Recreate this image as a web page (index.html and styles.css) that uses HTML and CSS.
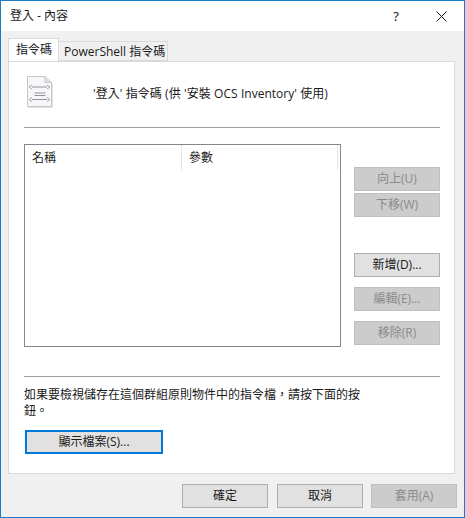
FILE: index.html
```html
<!DOCTYPE html>
<html lang="zh-Hant">
<head>
<meta charset="utf-8">
<title>登入 - 內容</title>
<link rel="stylesheet" href="styles.css">
</head>
<body>
<div class="window">
  <header class="titlebar">
    <span class="title">登入 - 內容</span>
    <span class="help">?</span>
    <svg class="close" width="11" height="11" viewBox="0 0 11 11"><path d="M0.5 0.5L10.5 10.500M10.5 0.5L0.5 10.500" stroke="#1a1a1a" stroke-width="1" fill="none"/></svg>
  </header>
  <div class="body">
    <div class="tabs">
      <div class="tab active">指令碼</div>
      <div class="tab">PowerShell 指令碼</div>
    </div>
    <main class="panel">
      <div class="heading">
        <svg class="doc" width="26" height="33" viewBox="0 0 26 33">
          <path d="M0.5 0.5H18L24.500 6.500V30.500H0.500Z" fill="#f7f7f9" stroke="#c6c6cc"/>
          <path d="M18 0.5V6.500H24.500" fill="#dfdfe4" stroke="#c6c6cc"/>
          <path d="M25.500 7.500V31.500H1.500" fill="none" stroke="#e2e2e6"/>
          <path d="M5 11H20M7.500 17H18.500M7.500 19.500H18.500M5 23.500H20" stroke="#92939b" fill="none"/>
          <path d="M5 9L2 11L5 13M20 9L23 11L20 13M5 21.500L2 23.500L5 25.500M20 21.500L23 23.500L20 25.500" stroke="#a5a6ae" fill="none"/>
        </svg>
        <p class="heading-text">'登入' 指令碼 (供 '安裝 OCS Inventory' 使用)</p>
      </div>
      <hr class="rule">
      <div class="content">
        <div class="list">
          <div class="list-head">
            <div class="col col-name">名稱</div>
            <div class="col col-param">參數</div>
            <div class="col col-end"></div>
          </div>
        </div>
        <div class="side">
          <div class="btn-group">
            <button class="btn" disabled>向上(U)</button>
            <button class="btn" disabled>下移(W)</button>
          </div>
          <div class="btn-group spaced">
            <button class="btn">新增(D)...</button>
            <button class="btn" disabled>編輯(E)...</button>
            <button class="btn" disabled>移除(R)</button>
          </div>
        </div>
      </div>
      <hr class="rule lower">
      <p class="hint">如果要檢視儲存在這個群組原則物件中的指令檔，請按下面的按鈕。</p>
      <button class="btn show">顯示檔案(S)...</button>
    </main>
    <footer class="footer">
      <button class="btn">確定</button>
      <button class="btn">取消</button>
      <button class="btn" disabled>套用(A)</button>
    </footer>
  </div>
</div>
</body>
</html>
```

FILE: styles.css
```css
* { box-sizing: border-box; }
html, body { margin: 0; padding: 0; }
body {
  width: 465px;
  height: 518px;
  overflow: hidden;
  font-family: "Open Sans", "Noto Sans CJK TC", sans-serif;
  font-size: 12px;
  color: #1a1a1a;
}
.window {
  width: 465px;
  height: 518px;
  border: 1px solid #1a7cc4;
  display: flex;
  flex-direction: column;
  background: #f0f0f0;
}
.titlebar {
  height: 30px;
  flex: none;
  background: #fff;
  display: flex;
  align-items: center;
  padding-left: 9px;
}
.title { flex: 1; line-height: 30px; }
.help { width: 12px; text-align: center; font-size: 13px; font-family: "Noto Sans", sans-serif; margin-right: 34px; }
.close { margin-right: 17px; }
.body { flex: 1; display: flex; flex-direction: column; padding: 8px 7px 0; }
.tabs { display: flex; align-items: flex-end; height: 22px; position: relative; z-index: 1; flex: none; }
.tab {
  height: 20px;
  width: 109px;
  padding: 0 0 0 5px;
  line-height: 19px;
  background: #f0f0f0;
  border: 1px solid #d9d9d9;
  border-left: 0;
  white-space: nowrap;
}
.tab.active {
  height: 23px;
  width: 51px;
  padding: 0 0 0 7px;
  line-height: 21px;
  background: #fff;
  border-left: 1px solid #d9d9d9;
  border-bottom: 0;
}
.panel {
  width: 447px;
  height: 413px;
  flex: none;
  background: #fff;
  border: 1px solid #d9d9d9;
  padding: 14px 14px 0 15px;
}
.heading { display: flex; align-items: flex-start; height: 33px; }
.doc { flex: none; margin: 0 0 0 3px; }
.heading-text { margin: 10px 0 0 40px; line-height: 16px; white-space: nowrap; word-spacing: 0.3px; }
.rule { margin: 18px 0 0; border: 0; height: 1px; background: #a0a0a0; width: 416px; }
.rule.lower { margin-top: 29px; }
.content { display: flex; margin-top: 16px; width: 416px; justify-content: space-between; }
.list { width: 317px; height: 203px; border: 1px solid #828790; }
.list-head { display: flex; height: 25px; }
.col { padding: 4px 0 0 7px; line-height: 17px; border-right: 1px solid #e5e5e5; }
.col-name { width: 157px; }
.col-param { flex: 1; }
.col-end { width: 2px; padding: 0; border-right: 0; }
.side { width: 86px; padding-top: 23px; }
.btn-group { display: flex; flex-direction: column; gap: 2px; }
.btn-group.spaced { gap: 10px; margin-top: 36px; }
.btn {
  width: 86px;
  height: 24px;
  padding: 0;
  font: inherit;
  line-height: 20px;
  color: #1a1a1a;
  background: #e1e1e1;
  border: 1px solid #adadad;
}
.btn:disabled { color: #8a8a8a; background: #cccccc; border-color: #bfbfbf; }
.hint { margin: 10px 0 0; width: 340px; line-height: 16px; }
.btn.show { display: block; width: 138px; margin: 11px 0 0 1px; border: 2px solid #0078d7; }
.footer { display: flex; justify-content: flex-end; gap: 9px; padding: 10px 0 0; width: 449px; }
.footer .btn:last-child { margin-left: -1px; }
```
